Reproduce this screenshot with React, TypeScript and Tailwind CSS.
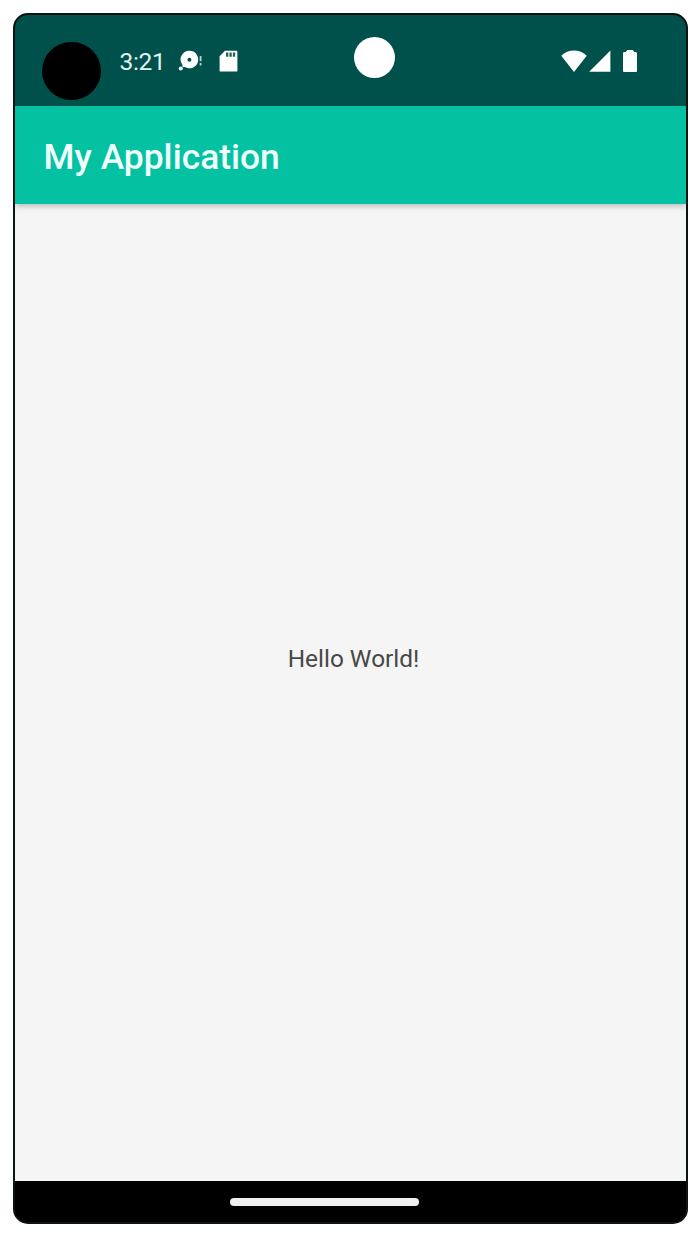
function DiscIcon() {
  return (
    <svg className="block h-[22px] w-[24px] shrink-0" viewBox="0 0 24 22" fill="none">
      <path
        fillRule="evenodd"
        clipRule="evenodd"
        d="M11.4 0.7a8.8 8.8 0 1 1-4.6 16.3L4.6 17 4.4 14.8A8.8 8.8 0 0 1 11.4 0.7ZM11.4 7.7a2 2 0 1 0 0 4 2 2 0 0 0 0-4Z"
        fill="#fbffff"
      />
      <circle cx="2.8" cy="18.5" r="2.1" fill="#e6f5f4" />
      <path d="M22.6 6v5.2M22.6 13v2.6" stroke="#b5d4d1" strokeWidth="1.8" />
    </svg>
  );
}

function SdCardIcon() {
  return (
    <svg className="block h-[22px] w-[19px] shrink-0" viewBox="0 0 19 22">
      <path d="M6 0.8h11.2a1.2 1.2 0 0 1 1.2 1.2v18.4a1.2 1.2 0 0 1-1.2 1.2H1.8a1.2 1.2 0 0 1-1.2-1.2V6.2Z" fill="#fff" />
      <path d="M8.2 2.4v4.4M11.6 2.4v4.4M15 2.4v4.4" stroke="#1d645f" strokeWidth="2.3" />
    </svg>
  );
}

function WifiIcon() {
  return (
    <svg className="block h-[22px] w-[26px] shrink-0" viewBox="0 0 26 22">
      <path d="M0.3 5.8C7-1.3 19-1.3 25.7 5.8L13 21.9Z" fill="#fff" />
    </svg>
  );
}

function SignalIcon() {
  return (
    <svg className="block h-[22px] w-[22px] shrink-0" viewBox="0 0 22 22">
      <path d="M21.4 0.5v21.3H0.2Z" fill="#fff" />
    </svg>
  );
}

function BatteryIcon() {
  return (
    <svg className="block h-[22px] w-[14px] shrink-0" viewBox="0 0 14 22">
      <path d="M4.2 0h5.6l1.4 2h1.4A1.4 1.4 0 0 1 14 3.4V21a1 1 0 0 1-1 1H1a1 1 0 0 1-1-1V3.4A1.4 1.4 0 0 1 1.4 2h1.4Z" fill="#fff" />
    </svg>
  );
}

function StatusBar() {
  return (
    <header className="relative flex h-[91px] shrink-0 items-start bg-[#00514c] pl-[27px]">
      <div className="mt-[26.5px] size-[58.5px] shrink-0 rounded-full bg-black" />
      <div className="mt-[32px] ml-[19px] w-[46.5px] text-[24.5px] leading-[30px] tracking-[-0.3px] whitespace-nowrap text-[#e3f3f2]">3:21</div>
      <div className="mt-[35px] ml-[12px] flex gap-[17px]">
        <DiscIcon />
        <SdCardIcon />
      </div>
      <div className="absolute top-[22px] left-[339px] size-[41px] rounded-full bg-white" />
      <div className="mt-[35px] mr-[49px] ml-auto flex">
        <WifiIcon />
        <div className="ml-[2px]">
          <SignalIcon />
        </div>
        <div className="ml-[12px]">
          <BatteryIcon />
        </div>
      </div>
    </header>
  );
}

export default function App() {
  return (
    <div className="h-[1236px] w-[700px] bg-white pt-[13px] pl-[13px] font-['Roboto',sans-serif]">
      <div className="flex h-[1211px] w-[675px] flex-col overflow-hidden rounded-[15px] border-2 border-[#0b1413] bg-black">
        <StatusBar />
        <div className="relative z-10 flex h-[98px] shrink-0 items-center bg-[#04c1a2] pt-[4px] pl-[28.6px] shadow-[0_2px_6px_rgba(0,0,0,0.25)]">
          <h1 className="text-[35.4px] leading-[42px] font-medium whitespace-nowrap text-[#f0fffc]">My Application</h1>
        </div>
        <main className="flex flex-1 items-center justify-center bg-[#f5f5f5] pb-[67px] pl-[6px]">
          <p className="text-[24.4px] leading-[30px] whitespace-nowrap text-[#484848]">Hello World!</p>
        </main>
        <nav className="flex h-[41px] shrink-0 items-center bg-black pl-[215px]">
          <div className="h-[8px] w-[189px] rounded-full bg-[#f0f0f0]" />
        </nav>
      </div>
    </div>
  );
}
